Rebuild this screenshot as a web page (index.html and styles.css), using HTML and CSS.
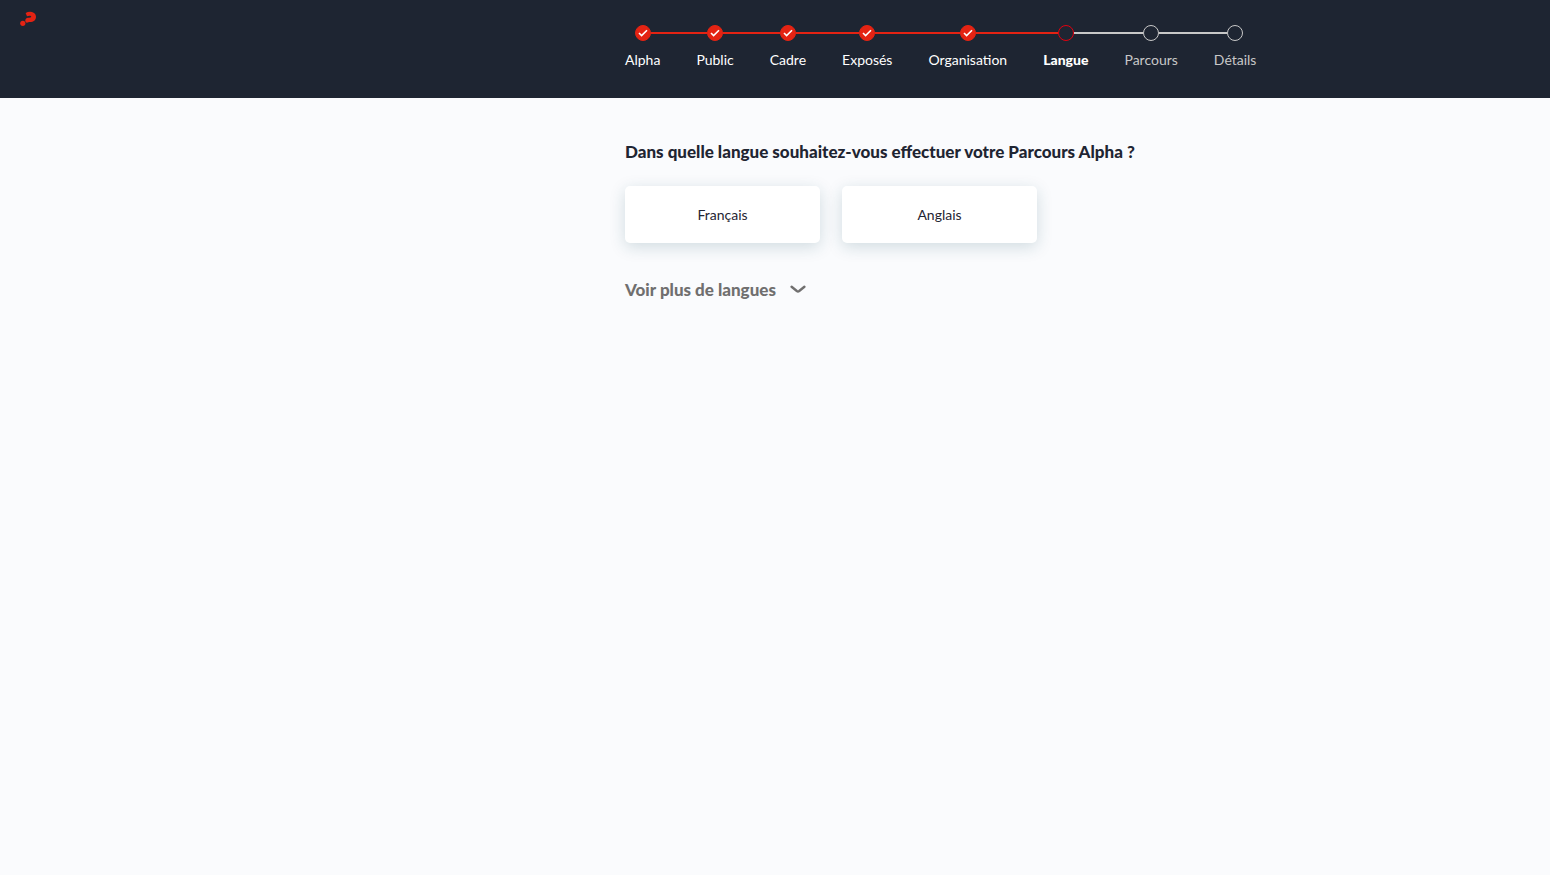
FILE: index.html
```html
<!DOCTYPE html>
<html lang="fr">
  <head>
    <meta charset="utf-8" />
    <title>Parcours Alpha</title>
    <meta name="viewport" content="width=device-width, initial-scale=1.0" />
    <link rel="stylesheet" href="styles.css">
  </head>

  <body>
    <header class="header">
      <a class="logo" href="#" aria-label="Alpha">
        <svg width="16" height="16" viewBox="0 0 16 16">
          <circle cx="2.8" cy="12.3" r="2.6" fill="#e42313" />
          <path d="M5.6 2C8 .6 11.4.4 13.6 1.7c1.6 1 2.4 2.4 2.4 4.1 0 3.3-2.6 5.3-6 5.3-1.3 0-2 .6-3 .6-1.2 0-1.9-1.1-1.7-2.5.2-1.6 1.2-2.4 2.7-2.5 1.6-.1 3.2 0 3.2-1 0-1.3-2.3-1.3-4.2-.5z" fill="#e42313" />
        </svg>
      </a>
      <ol class="steps">
        <li class="step done">
          <div class="marker"><span class="circle"><svg width="10" height="8" viewBox="0 0 10 8"><path d="M1 4l2.6 2.6L9 1.2" /></svg></span></div>
          <a class="label" href="#">Alpha</a>
        </li>
        <li class="step done">
          <div class="marker"><span class="circle"><svg width="10" height="8" viewBox="0 0 10 8"><path d="M1 4l2.6 2.6L9 1.2" /></svg></span></div>
          <a class="label" href="#">Public</a>
        </li>
        <li class="step done">
          <div class="marker"><span class="circle"><svg width="10" height="8" viewBox="0 0 10 8"><path d="M1 4l2.6 2.6L9 1.2" /></svg></span></div>
          <a class="label" href="#">Cadre</a>
        </li>
        <li class="step done">
          <div class="marker"><span class="circle"><svg width="10" height="8" viewBox="0 0 10 8"><path d="M1 4l2.6 2.6L9 1.2" /></svg></span></div>
          <a class="label" href="#">Exposés</a>
        </li>
        <li class="step done">
          <div class="marker"><span class="circle"><svg width="10" height="8" viewBox="0 0 10 8"><path d="M1 4l2.6 2.6L9 1.2" /></svg></span></div>
          <a class="label" href="#">Organisation</a>
        </li>
        <li class="step current" aria-current="step">
          <div class="marker"><span class="circle"></span></div>
          <span class="label">Langue</span>
        </li>
        <li class="step">
          <div class="marker"><span class="circle"></span></div>
          <span class="label">Parcours</span>
        </li>
        <li class="step">
          <div class="marker"><span class="circle"></span></div>
          <span class="label">Détails</span>
        </li>
      </ol>
    </header>
    <main class="content">
      <h1 class="question">Dans quelle langue souhaitez-vous effectuer votre Parcours Alpha ?</h1>
      <div class="choices">
        <button class="choice" type="button">Français</button>
        <button class="choice" type="button">Anglais</button>
      </div>
      <button class="more" type="button">
        Voir plus de langues
        <svg width="16" height="10" viewBox="0 0 16 10"><path d="M1.6 1.8L6.8 6Q8 6.9 9.2 6L14.4 1.8" /></svg>
      </button>
    </main>
  </body>
</html>
```

FILE: styles.css
```css
* {
  box-sizing: border-box;
}
body {
  margin: 0;
  font-family: Lato, sans-serif;
  font-size: 14px;
  color: #1f2532;
  background: #fafbfd;
}
.header {
  display: flex;
  padding: 0 20px 28px;
  background: #1e2532;
}
.logo {
  width: calc(50% - 150px);
  padding-top: 11px;
}
.logo svg {
  display: block;
}
.steps {
  display: flex;
  margin: 0 0 0 -18px;
  padding: 25px 0 0;
  list-style: none;
}
.marker {
  display: flex;
  align-items: center;
}
.marker::before,
.marker::after {
  content: '';
  flex: 1;
  height: 2px;
  background: #c8c8c8;
}
.done .marker::before,
.done .marker::after,
.current .marker::before {
  background: #e42313;
}
.step:first-child .marker::before,
.step:last-child .marker::after {
  background: none;
}
.circle {
  display: flex;
  align-items: center;
  justify-content: center;
  width: 16px;
  height: 16px;
  border: 1px solid #c8c8c8;
  border-radius: 50%;
}
.circle path {
  fill: none;
  stroke: white;
  stroke-width: 1.6;
}
.done .circle {
  border-color: #e42313;
  background: #e42313;
}
.current .circle {
  border-color: #e3000f;
}
.label {
  display: block;
  padding: 8px 18px 0;
  line-height: 21px;
  color: #c8c8c8;
  text-decoration: none;
}
.done .label {
  color: white;
}
.current .label {
  font-weight: 900;
  color: white;
}
.content {
  padding: 42px 20px 42px calc(50% - 150px);
}
.question {
  margin: 0 0 22px;
  font-size: 17px;
  line-height: 24px;
  font-weight: 900;
}
.choices {
  display: flex;
  flex-wrap: wrap;
  gap: 22px;
}
.choice {
  width: 195px;
  height: 57px;
  border: none;
  border-radius: 5px;
  font: inherit;
  color: inherit;
  background: white;
  box-shadow: 0 4px 16px rgba(20, 80, 95, 0.18);
  cursor: pointer;
}
.more {
  display: flex;
  align-items: center;
  gap: 14px;
  margin-top: 35px;
  padding: 0;
  border: none;
  font: inherit;
  font-size: 17px;
  line-height: 24px;
  font-weight: 900;
  color: #706f6f;
  background: none;
  cursor: pointer;
}
.more path {
  fill: none;
  stroke: #706f6f;
  stroke-width: 2.4;
  stroke-linecap: round;
}
@media screen and (max-width: 1300px) {
  .logo {
    width: 60px;
  }
  .content {
    padding-left: 80px;
  }
}
```
